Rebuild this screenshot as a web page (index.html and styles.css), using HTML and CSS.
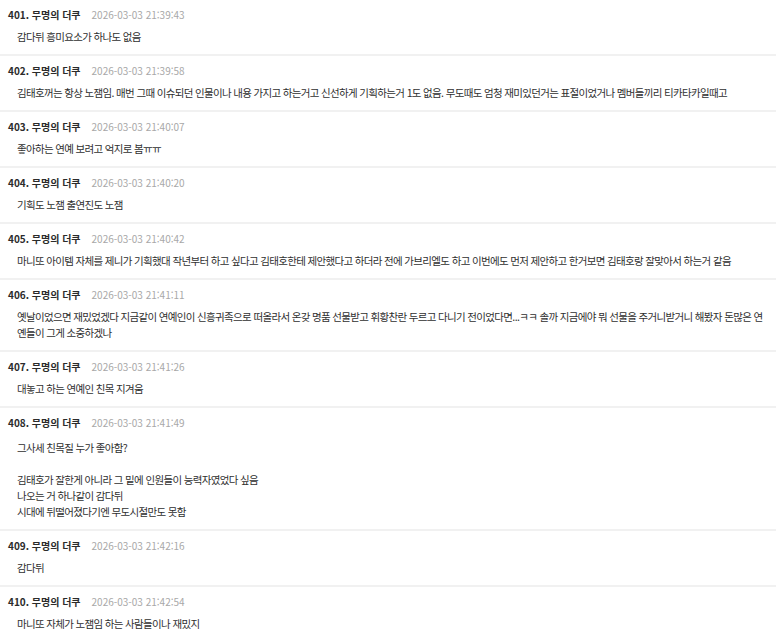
FILE: index.html
```html
<!DOCTYPE html>
<html lang="ko">
<head>
<meta charset="utf-8">
<link rel="stylesheet" href="styles.css">
</head>
<body>
<ul class="comments">
  <li class="comment">
    <div class="meta"><span class="author">401. 무명의 더쿠</span><span class="date">2026-03-03 21:39:43</span></div>
    <div class="text">감다뒤 흥미요소가 하나도 없음</div>
  </li>
  <li class="comment">
    <div class="meta"><span class="author">402. 무명의 더쿠</span><span class="date">2026-03-03 21:39:58</span></div>
    <div class="text">김태호꺼는 항상 노잼임. 매번 그때 이슈되던 인물이나 내용 가지고 하는거고 신선하게 기획하는거 1도 없음. 무도때도 엄청 재미있던거는 표절이었거나 멤버들끼리 티카타카일때고</div>
  </li>
  <li class="comment">
    <div class="meta"><span class="author">403. 무명의 더쿠</span><span class="date">2026-03-03 21:40:07</span></div>
    <div class="text">좋아하는 연예 보려고 억지로 봄ㅠㅠ</div>
  </li>
  <li class="comment">
    <div class="meta"><span class="author">404. 무명의 더쿠</span><span class="date">2026-03-03 21:40:20</span></div>
    <div class="text">기획도 노잼 출연진도 노잼</div>
  </li>
  <li class="comment">
    <div class="meta"><span class="author">405. 무명의 더쿠</span><span class="date">2026-03-03 21:40:42</span></div>
    <div class="text">마니또 아이템 자체를 제니가 기획했대 작년부터 하고 싶다고 김태호한테 제안했다고 하더라 전에 가브리엘도 하고 이번에도 먼저 제안하고 한거보면 김태호랑 잘맞아서 하는거 같음</div>
  </li>
  <li class="comment">
    <div class="meta"><span class="author">406. 무명의 더쿠</span><span class="date">2026-03-03 21:41:11</span></div>
    <div class="text">옛날이었으면 재밌었겠다 지금같이 연예인이 신흥귀족으로 떠올라서 온갖 명품 선물받고 휘황찬란 두르고 다니기 전이었다면...ㅋㅋ 솔까 지금에야 뭐 선물을 주거니받거니 해봤자 돈많은 연옌들이 그게 소중하겠나</div>
  </li>
  <li class="comment">
    <div class="meta"><span class="author">407. 무명의 더쿠</span><span class="date">2026-03-03 21:41:26</span></div>
    <div class="text">대놓고 하는 연예인 친목 지겨움</div>
  </li>
  <li class="comment">
    <div class="meta"><span class="author">408. 무명의 더쿠</span><span class="date">2026-03-03 21:41:49</span></div>
    <div class="text text-multi">그사세 친목질 누가 좋아함?<br><br>김태호가 잘한게 아니라 그 밑에 인원들이 능력자였었다 싶음<br>나오는 거 하나같이 감다뒤<br>시대에 뒤떨어졌다기엔 무도시절만도 못함</div>
  </li>
  <li class="comment">
    <div class="meta"><span class="author">409. 무명의 더쿠</span><span class="date">2026-03-03 21:42:16</span></div>
    <div class="text">감다뒤</div>
  </li>
  <li class="comment">
    <div class="meta"><span class="author">410. 무명의 더쿠</span><span class="date">2026-03-03 21:42:54</span></div>
    <div class="text">마니또 자체가 노잼임 하는 사람들이나 재밌지</div>
  </li>
</ul>
</body>
</html>
```

FILE: styles.css
```css
html, body {
  margin: 0;
  padding: 0;
  background: #ffffff;
}
body {
  font-family: "Noto Sans CJK KR", "Noto Sans", sans-serif;
  color: #333333;
}
.comments {
  list-style: none;
  margin: 0;
  padding: 0;
}
.comment {
  padding: 7px 8px 9px 8px;
  border-bottom: 2px solid #f1f1f1;
}
.meta {
  display: flex;
  align-items: center;
  gap: 11px;
  height: 16px;
  line-height: 16px;
  margin-bottom: 6px;
}
.author {
  font-size: 10px;
  font-weight: 700;
  color: #2b2b2b;
}
.date {
  font-size: 10px;
  color: #a8a8a8;
}
.text {
  padding-left: 9px;
  font-size: 10.5px;
  letter-spacing: -0.66px;
  line-height: 16px;
  color: #2f2f2f;
}
.text-multi {
  padding-top: 3px;
}
```
